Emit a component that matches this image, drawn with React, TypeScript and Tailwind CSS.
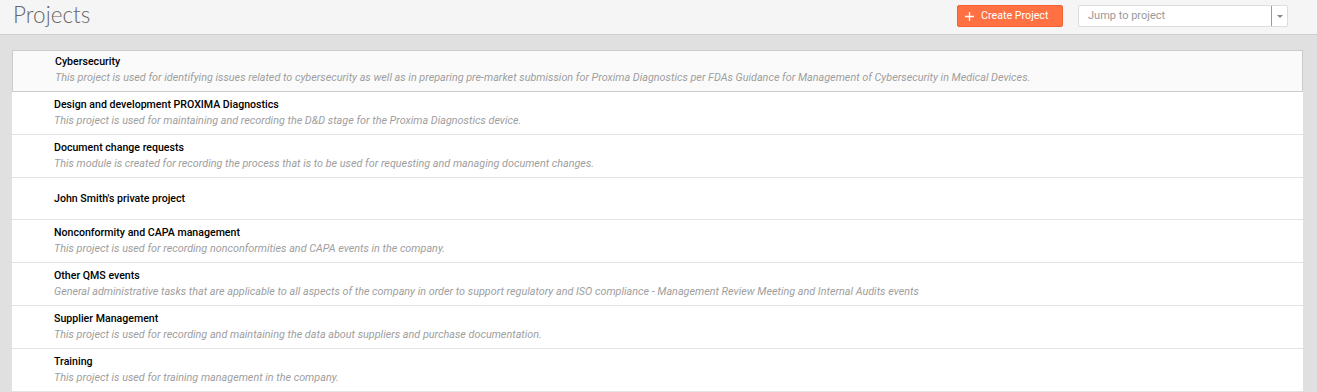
import React from "react";

const projects: { title: string; desc?: string }[] = [
  {
    title: "Cybersecurity",
    desc: "This project is used for identifying issues related to cybersecurity as well as in preparing pre-market submission for Proxima Diagnostics per FDAs Guidance for Management of Cybersecurity in Medical Devices.",
  },
  {
    title: "Design and development PROXIMA Diagnostics",
    desc: "This project is used for maintaining and recording the D&D stage for the Proxima Diagnostics device.",
  },
  {
    title: "Document change requests",
    desc: "This module is created for recording the process that is to be used for requesting and managing document changes.",
  },
  { title: "John Smith's private project" },
  {
    title: "Nonconformity and CAPA management",
    desc: "This project is used for recording nonconformities and CAPA events in the company.",
  },
  {
    title: "Other QMS events",
    desc: "General administrative tasks that are applicable to all aspects of the company in order to support regulatory and ISO compliance - Management Review Meeting and Internal Audits events",
  },
  {
    title: "Supplier Management",
    desc: "This project is used for recording and maintaining the data about suppliers and purchase documentation.",
  },
  {
    title: "Training",
    desc: "This project is used for training management in the company.",
  },
];

export default function App() {
  return (
    <div className="w-[1317px] h-[392px] overflow-hidden bg-[#e0e0e0] font-['Roboto',sans-serif]">
      <header className="h-[35px] bg-[#f5f5f5] border-b border-[#cfcfcf] flex items-center pl-[13px] pr-[29px]">
        <h1 className="text-[22.5px] leading-none font-light text-[#666] font-['Lato',sans-serif] -mt-[4px]">
          Projects
        </h1>
        <div className="ml-auto flex items-center -mt-[2px]">
          <button className="h-[22px] w-[106px] bg-[#ff7043] border border-[#f4602f] rounded-[2px] text-white text-[10.7px] flex items-center pl-[7px] gap-[7px]">
            <svg width="9" height="9" viewBox="0 0 9 9">
              <path d="M4.5 0v9M0 4.5h9" stroke="white" strokeWidth="1.3" />
            </svg>
            <span>Create Project</span>
          </button>
          <div className="ml-[15px] h-[22px] w-[210px] bg-white border border-[#ddd] rounded-[2px] flex items-center">
            <span className="flex-1 pl-[9px] text-[11px] text-[#999]">Jump to project</span>
            <div className="w-px h-[20px] bg-[#999]" />
            <div className="w-[15px] flex justify-center">
              <svg width="6" height="3" viewBox="0 0 6 3">
                <path d="M0 0h6L3 3z" fill="#888" />
              </svg>
            </div>
          </div>
        </div>
      </header>
      <main className="pt-[15px] pl-[12px] pr-[14px]">
        <div className="bg-white">
          {projects.map((p, i) => (
            <div
              key={p.title}
              className={
                "box-border flex flex-col pl-[42px] " +
                (i === 0
                  ? "bg-[#fafafa] border border-[#cccccc] h-[42px] pt-[4px]"
                  : "h-[42.8px] border-b border-[#e3e3e3] " +
                    (p.desc ? "pt-[6px]" : "justify-center pt-[1px]"))
              }
            >
              <div className="text-[10.6px] leading-[14px] font-medium text-black">{p.title}</div>
              {p.desc && (
                <div className="text-[10.8px] leading-[14px] italic text-[#9e9e9e] mt-[2px]">{p.desc}</div>
              )}
            </div>
          ))}
        </div>
      </main>
    </div>
  );
}
